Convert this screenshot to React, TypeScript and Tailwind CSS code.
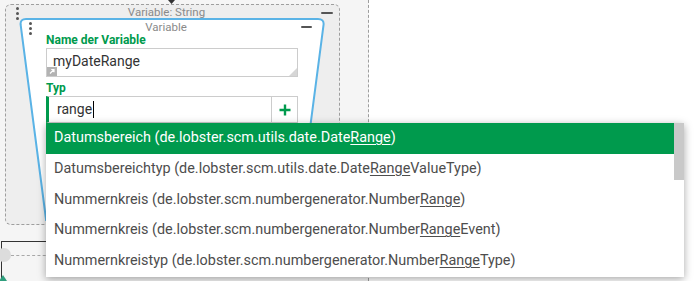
import React from "react";

type Suggestion = { pre: string; hit: string; post: string };

const suggestions: Suggestion[] = [
  { pre: "Datumsbereich (de.lobster.scm.utils.date.Date", hit: "Range", post: ")" },
  { pre: "Datumsbereichtyp (de.lobster.scm.utils.date.Date", hit: "Range", post: "ValueType)" },
  { pre: "Nummernkreis (de.lobster.scm.numbergenerator.Number", hit: "Range", post: ")" },
  { pre: "Nummernkreis (de.lobster.scm.numbergenerator.Number", hit: "Range", post: "Event)" },
  { pre: "Nummernkreistyp (de.lobster.scm.numbergenerator.Number", hit: "Range", post: "Type)" },
];

export default function App() {
  return (
    <div className="relative h-[281px] w-[694px] overflow-hidden bg-white font-['Roboto',sans-serif]">
      {/* lane */}
      <div className="h-[281px] w-[369px] border-r border-dashed border-[#9e9e9e] bg-[#f5f5f5] pl-[5px] pt-[4px]">
        <div className="h-[221px] w-[335px] rounded-[6px] border border-dashed border-[#9e9e9e] bg-[#eeeeee]">
          <div className="grid h-[13px] grid-cols-[1fr_auto_1fr] pr-[12px]">
            <Dots className="ml-[10px] pt-[2px]" />
            <span className="pt-[1px] text-[11.5px] leading-[13px] text-[#8a8a8a]">Variable: String</span>
            <Dash className="mr-[-6px] mt-[7px] w-[12px] justify-self-end" />
          </div>

          <div className="relative ml-[13px] h-[203px] w-[306px]">
            <svg className="absolute inset-0 overflow-visible" width="306" height="203">
              <path
                d="M27.1 202 L1.6 6.5 Q1.2 1 7 1 L299 1 Q305 1 304.6 6.5 L279.1 202 Z"
                fill="#ffffff"
                stroke="#5ab3e6"
                strokeWidth="2"
              />
            </svg>

            <div className="relative">
              <div className="grid h-[16px] grid-cols-[1fr_auto_1fr] pr-[12px]">
                <Dots className="ml-[10px] pt-[4px]" />
                <span className="pt-[3px] text-[11.5px] leading-[13px] text-[#8a8a8a]">Variable</span>
                <Dash className="mr-[1px] mt-[8px] w-[11px] justify-self-end" />
              </div>

              <div className="pl-[27px]">
                <p className="text-[12px] font-bold leading-[13px] text-[#009a4d]">Name der Variable</p>
                <div className="relative mt-[1px] h-[29px] w-[252px] border border-[#cccccc] bg-white pl-[6px] pt-[2px] text-[14px] leading-[20px] text-[#333333]">
                  myDateRange
                  <svg className="absolute bottom-0 left-0" width="10" height="9" viewBox="0 0 10 9">
                    <rect width="10" height="9" fill="#b3b3b3" />
                    <path d="M3 6.5 L7 2.5 M4.2 2.5 H7 V5.3" stroke="#ffffff" strokeWidth="1.2" fill="none" />
                  </svg>
                  <svg className="absolute bottom-0 right-0" width="8" height="8" viewBox="0 0 8 8">
                    <path d="M8 0 L8 8 L0 8 Z" fill="#d6d6d6" />
                  </svg>
                </div>

                <p className="mt-[5px] text-[12px] font-bold leading-[13px] text-[#009a4d]">Typ</p>
                <div className="mt-[1px] flex h-[27px] w-[252px] border border-l-[3px] border-[#cccccc] border-l-[#009a4d] bg-white">
                  <div className="flex flex-1 items-start pl-[8px] pt-[2px] text-[14px] leading-[20px] text-[#333333]">
                    range
                    <span className="ml-[1px] mt-[2px] h-[17px] w-px bg-black" />
                  </div>
                  <div className="flex w-[26px] items-center justify-center border-l border-[#cccccc]">
                    <svg width="12" height="12" viewBox="0 0 12 12">
                      <path d="M6 0.5 V11.5 M0.5 6 H11.5" stroke="#009a4d" strokeWidth="2.4" />
                    </svg>
                  </div>
                </div>
              </div>
            </div>
          </div>
        </div>
      </div>

      {/* canvas pieces below the lane */}
      <div className="absolute left-[1px] top-[241px] h-[50px] w-[80px] border-l border-t border-[#333333]" />
      <div className="absolute left-[-3px] top-[248px] h-[14px] w-[14px] rounded-full bg-[#dcdcdc]" />
      <div className="absolute left-[11px] top-[255px] w-[40px] border-t border-dashed border-[#a8a8a8]" />
      <svg className="absolute left-0 top-[275px]" width="8" height="6" viewBox="0 0 8 6">
        <path d="M3 0 L7 6 L-1 6 Z" fill="#2f9e7d" />
      </svg>
      <svg className="absolute left-[168px] top-0" width="7" height="4" viewBox="0 0 7 4">
        <path d="M0 0 H7 L3.5 4 Z" fill="#333333" />
      </svg>

      {/* autocomplete list */}
      <div className="absolute left-[46px] top-[123px] flex h-[154px] w-[638px] bg-white shadow-[0_2px_8px_rgba(0,0,0,0.35)]">
        <ul className="flex-1">
          {suggestions.map((s, i) => (
            <li
              key={i}
              className={`h-[30.8px] whitespace-nowrap pl-[8px] text-[14.4px] leading-[30.8px] ${
                i === 0 ? "bg-[#009a4d] text-white" : "text-[#4d4d4d]"
              }`}
            >
              {s.pre}
              <span className="underline underline-offset-2">{s.hit}</span>
              {s.post}
            </li>
          ))}
        </ul>
        <div className="w-[10px]">
          <div className="h-[57px] bg-[#c9c9c9]" />
        </div>
      </div>
    </div>
  );
}

function Dots({ className = "" }: { className?: string }) {
  return (
    <div className={`flex flex-col gap-[2px] ${className}`}>
      <span className="size-[3px] rounded-full bg-[#555555]" />
      <span className="size-[3px] rounded-full bg-[#555555]" />
      <span className="size-[3px] rounded-full bg-[#555555]" />
    </div>
  );
}

function Dash({ className = "" }: { className?: string }) {
  return <span className={`block h-[2px] rounded-full bg-[#555555] ${className}`} />;
}
